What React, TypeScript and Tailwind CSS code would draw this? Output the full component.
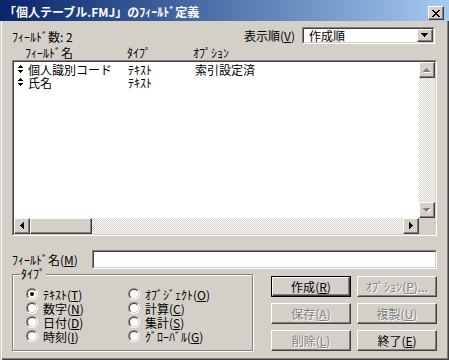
import React from 'react';
import clsx from 'clsx';

// Win2000 style dialog: field definitions
const raised =
  'border border-t-white border-l-white border-r-[#404040] border-b-[#404040] shadow-[inset_-1px_-1px_0_#808080] bg-[#d4d0c8]';
const dither =
  'bg-[repeating-conic-gradient(#ffffff_0%_25%,#d4d0c8_0%_50%)] bg-[length:2px_2px]';

function Sunken({ className, inner, children }: { className?: string; inner?: string; children?: React.ReactNode }) {
  return (
    <div className={clsx('border border-t-[#808080] border-l-[#808080] border-r-white border-b-white', className)}>
      <div
        className={clsx(
          'h-full w-full border border-t-[#404040] border-l-[#404040] border-r-[#d4d0c8] border-b-[#d4d0c8] bg-white',
          inner
        )}
      >
        {children}
      </div>
    </div>
  );
}

function Mn({ pre, k, post }: { pre: string; k: string; post?: string }) {
  return (
    <>
      {pre}(<span className="underline underline-offset-[1px]">{k}</span>){post}
    </>
  );
}

function Arrow({ dir, disabled }: { dir: 'up' | 'down' | 'left' | 'right'; disabled?: boolean }) {
  const vertical = dir === 'up' || dir === 'down';
  const w = vertical ? 8 : 5;
  const h = vertical ? 5 : 8;
  const pts = {
    up: '3.5,0 7,4 0,4',
    down: '0,0 7,0 3.5,4',
    left: '4,0 4,7 0,3.5',
    right: '0,0 0,7 4,3.5',
  }[dir];
  return (
    <svg width={w} height={h} viewBox={`0 0 ${w} ${h}`} shapeRendering="crispEdges">
      {disabled && <polygon points={pts} fill="#ffffff" transform="translate(1,1)" />}
      <polygon points={pts} fill={disabled ? '#808080' : '#000000'} />
    </svg>
  );
}

function ScrollBtn({ dir, disabled }: { dir: 'up' | 'down' | 'left' | 'right'; disabled?: boolean }) {
  return (
    <div className={clsx('w-[16px] h-[16px] shrink-0 flex items-center justify-center', raised)}>
      <Arrow dir={dir} disabled={disabled} />
    </div>
  );
}

function Radio({ checked }: { checked?: boolean }) {
  return (
    <div className="w-[12px] h-[12px] shrink-0 rounded-full border border-t-[#808080] border-l-[#808080] border-r-white border-b-white">
      <div className="w-full h-full rounded-full border border-t-[#404040] border-l-[#404040] border-r-[#d4d0c8] border-b-[#d4d0c8] bg-white flex items-center justify-center">
        {checked && <div className="w-[4px] h-[4px] rounded-full bg-black" />}
      </div>
    </div>
  );
}

function Btn({ children, disabled, isDefault }: { children: React.ReactNode; disabled?: boolean; isDefault?: boolean }) {
  const face = (
    <div
      className={clsx(
        'w-full h-full flex items-center justify-center',
        raised,
        disabled && 'text-[#808080] [text-shadow:1px_1px_0_#ffffff]'
      )}
    >
      <span>{children}</span>
    </div>
  );
  if (isDefault) return <div className="h-[21px] border border-black">{face}</div>;
  return <div className="h-[21px]">{face}</div>;
}

function FieldIcon() {
  return (
    <svg width="5" height="9" viewBox="0 0 5 9" shapeRendering="crispEdges">
      <polygon points="2.5,0 5,3 0,3" fill="#000" />
      <polygon points="0,5 5,5 2.5,8" fill="#000" />
    </svg>
  );
}

const fields = [
  { name: '個人識別コード', type: 'ﾃｷｽﾄ', option: '索引設定済' },
  { name: '氏名', type: 'ﾃｷｽﾄ', option: '' },
];

const types: [string, string, boolean?][] = [
  ['ﾃｷｽﾄ', 'T', true],
  ['ｵﾌﾞｼﾞｪｸﾄ', 'O'],
  ['数字', 'N'],
  ['計算', 'C'],
  ['日付', 'D'],
  ['集計', 'S'],
  ['時刻', 'I'],
  ['ｸﾞﾛｰﾊﾞﾙ', 'G'],
];

export default function App() {
  return (
    <div className="w-[449px] h-[360px] bg-[#d4d0c8] text-black text-[12px] leading-[12px] font-['Noto_Sans_CJK_JP','Noto_Sans',sans-serif] flex flex-col shadow-[inset_1px_0_0_#d4d0c8,inset_2px_0_0_#ffffff,inset_-1px_-1px_0_#404040,inset_-2px_-2px_0_#808080]">
      {/* Title bar */}
      <div className="h-[21px] shrink-0 flex items-start bg-linear-to-r from-[#0a246a] to-[#a6caf0] pl-[4px] pr-[5px]">
        <div className="flex-1 pt-[6px] text-white font-bold">「個人テーブル.FMJ」のﾌｨｰﾙﾄﾞ定義</div>
        <div className={clsx('mt-[6px] w-[16px] h-[14px] flex items-center justify-center', raised)}>
          <svg width="8" height="7" viewBox="0 0 8 7" shapeRendering="crispEdges">
            <path d="M0 0h2v1h1v1h2V1h1V0h2v1H7v1H6v1H5v1h1v1h1v1h1v1H6V6H5V5H3v1H2v1H0V6h1V5h1V4h1V3H2V2H1V1H0z" fill="#000" />
          </svg>
        </div>
      </div>

      <div className="flex-1 flex flex-col px-[12px]">
        {/* Count + sort order */}
        <div className="mt-[6px] h-[17px] flex items-center">
          <div className="flex-1 pt-[2px]">ﾌｨｰﾙﾄﾞ数: 2</div>
          <div className="mr-[7px]">
            <Mn pre="表示順" k="V" />
          </div>
          <Sunken className="w-[133px] h-[17px] mr-[2px]" inner="flex items-center">
            <div className="flex-1 pl-[5px]">作成順</div>
            <div className={clsx('w-[16px] h-full flex items-center justify-center', raised)}>
              <Arrow dir="down" />
            </div>
          </Sunken>
        </div>

        {/* Column headers */}
        <div className="mt-[3px] h-[12px] flex pl-[13px]">
          <span className="w-[102px]">ﾌｨｰﾙﾄﾞ名</span>
          <span className="w-[66px]">ﾀｲﾌﾟ</span>
          <span>ｵﾌﾟｼｮﾝ</span>
        </div>

        {/* Field list */}
        <Sunken className="mt-[1px] h-[176px]" inner="flex flex-col">
          <div className="flex-1 flex min-h-0">
            <div className="flex-1 pt-[1px]">
              {fields.map((f) => (
                <div key={f.name} className="h-[13px] flex items-center pl-[4px]">
                  <span className="w-[10px] flex items-center">
                    <FieldIcon />
                  </span>
                  <span className="w-[100px]">{f.name}</span>
                  <span className="w-[67px]">{f.type}</span>
                  <span>{f.option}</span>
                </div>
              ))}
            </div>
            <div className={clsx('w-[16px] flex flex-col', dither)}>
              <ScrollBtn dir="up" disabled />
              <div className="flex-1" />
              <ScrollBtn dir="down" disabled />
            </div>
          </div>
          <div className="h-[16px] flex">
            <div className={clsx('flex-1 flex', dither)}>
              <ScrollBtn dir="left" />
              <div className={clsx('w-[62px] h-[16px]', raised)} />
              <div className="flex-1" />
              <ScrollBtn dir="right" />
            </div>
            <div className="w-[16px] bg-[#d4d0c8]" />
          </div>
        </Sunken>

        {/* Field name */}
        <div className="mt-[14px] h-[19px] flex items-center">
          <div className="w-[80px] pt-[1px]">
            <Mn pre="ﾌｨｰﾙﾄﾞ名" k="M" />
          </div>
          <Sunken className="flex-1 h-[19px]" />
        </div>

        {/* Type group + buttons */}
        <div className="mt-[5px] flex">
          <div className="relative w-[241px] h-[77px] border border-[#808080] shadow-[inset_1px_1px_0_#ffffff,1px_1px_0_#ffffff]">
            <span className="absolute -top-[7px] left-[7px] px-[1px] bg-[#d4d0c8]">ﾀｲﾌﾟ</span>
            <div className="pt-[12px] pl-[13px] grid grid-cols-[102px_1fr]">
              {types.map(([label, k, checked]) => (
                <div key={k} className="h-[14px] flex items-center gap-[5px]">
                  <Radio checked={checked} />
                  <span className="pt-[1px]">
                    <Mn pre={label} k={k} />
                  </span>
                </div>
              ))}
            </div>
          </div>
          <div className="ml-[18px] pt-[2px] grid grid-cols-[80px_80px] gap-[6px] h-fit">
            <Btn isDefault>
              <Mn pre="作成" k="R" />
            </Btn>
            <Btn disabled>
              <Mn pre="ｵﾌﾟｼｮﾝ" k="P" post="..." />
            </Btn>
            <Btn disabled>
              <Mn pre="保存" k="A" />
            </Btn>
            <Btn disabled>
              <Mn pre="複製" k="U" />
            </Btn>
            <Btn disabled>
              <Mn pre="削除" k="L" />
            </Btn>
            <Btn>
              <Mn pre="終了" k="E" />
            </Btn>
          </div>
        </div>
      </div>
    </div>
  );
}
